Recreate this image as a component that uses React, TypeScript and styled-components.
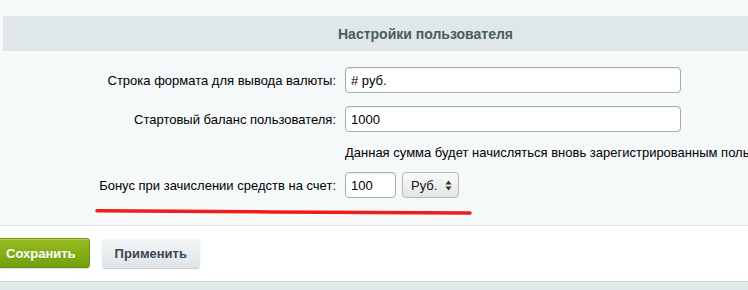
import React from "react";
import styled, { createGlobalStyle } from "styled-components";

const Global = createGlobalStyle`
  html, body { margin: 0; padding: 0; }
  body {
    background: #f5f9f9;
    font-family: "Liberation Sans", Arial, sans-serif;
    font-size: 13px;
    color: #000;
    overflow: hidden;
    width: 748px;
    height: 290px;
  }
`;

const Page = styled.div`
  width: 748px;
  height: 290px;
  overflow: hidden;
  display: flex;
  flex-direction: column;
`;

const HeaderBar = styled.div`
  margin: 16px 0 0 3px;
  height: 35px;
  flex: none;
  background: #e0e7e8;
  display: flex;
  align-items: center;
  padding-left: 335px;
  font-family: "Liberation Sans", Arial, sans-serif;
  font-weight: bold;
  font-size: 14px;
  color: #4b5a60;
`;

const Form = styled.div`
  display: flex;
  flex-direction: column;
  padding-top: 16px;
  height: 174px;
  flex: none;
  box-sizing: border-box;
  position: relative;
`;

const Row = styled.div<{ $gap: number }>`
  display: flex;
  align-items: center;
  gap: 9px;
  margin-bottom: ${(p) => p.$gap}px;
  white-space: nowrap;
`;

const Label = styled.label`
  width: 336px;
  text-align: right;
  flex: none;
`;

const TextInput = styled.input<{ $w: number }>`
  box-sizing: border-box;
  width: ${(p) => p.$w}px;
  height: 26px;
  border: 1px solid #a4abb1;
  border-radius: 4px;
  background: #fff;
  box-shadow: inset 0 1px 1px rgba(0, 0, 0, 0.06);
  font-family: "Liberation Sans", Arial, sans-serif;
  font-size: 13px;
  color: #000;
  padding: 0 5px;
  margin: 0;
  outline: none;
`;

const Hint = styled.div`
  padding-left: 345px;
  white-space: nowrap;
  line-height: 16px;
  margin-bottom: 11px;
`;

const SelectBox = styled.div`
  box-sizing: border-box;
  width: 57px;
  height: 26px;
  margin-left: -3px;
  border: 1px solid #b3b8bb;
  border-radius: 4px;
  background: linear-gradient(#fbfbfb, #e3e4e5);
  display: flex;
  align-items: center;
  justify-content: space-between;
  padding: 0 6px 0 8px;
  color: #111;
`;

const Arrows = styled.svg`
  width: 7px;
  height: 11px;
`;

const Underline = styled.svg`
  position: absolute;
  left: 95px;
  top: 157px;
  width: 378px;
  height: 8px;
`;

const Footer = styled.div`
  background: #fff;
  border-top: 1px solid #dbe3e6;
  height: 56px;
  flex: none;
  display: flex;
  align-items: flex-start;
  gap: 12px;
  padding-top: 12px;
  box-sizing: border-box;
`;

const Button = styled.button<{ $primary?: boolean }>`
  height: 30px;
  border-radius: 3px;
  font-family: "Liberation Sans", Arial, sans-serif;
  font-weight: bold;
  font-size: 13px;
  cursor: pointer;
  padding: 0 13px;
  margin: 0;
  ${(p) =>
    p.$primary
      ? `
    margin-left: -8px;
    border: 1px solid #6c9412;
    background: linear-gradient(#97bd1e, #71a00c);
    color: #fff;
    box-shadow: inset 0 1px 0 rgba(255,255,255,0.25), 0 1px 1px rgba(0,0,0,0.15);
    text-shadow: 0 1px 0 rgba(0,0,0,0.1);
  `
      : `
    width: 98px;
    border: none;
    background: linear-gradient(#f4f7f8, #dde5e8);
    color: #3d474d;
    box-shadow: 0 1px 1px rgba(0,0,0,0.22), inset 0 1px 0 #fff;
  `}
`;

const BottomBar = styled.div`
  flex: 1;
  background: #e2e9ea;
  border-top: 1px solid #cdd6d7;
`;

export default function App() {
  return (
    <Page>
      <Global />
      <HeaderBar>Настройки пользователя</HeaderBar>
      <Form>
        <Row $gap={13}>
          <Label>Строка формата для вывода валюты:</Label>
          <TextInput $w={336} defaultValue="# руб." />
        </Row>
        <Row $gap={13}>
          <Label>Стартовый баланс пользователя:</Label>
          <TextInput $w={336} defaultValue="1000" />
        </Row>
        <Hint>Данная сумма будет начисляться вновь зарегистрированным пользователям</Hint>
        <Row $gap={0}>
          <Label>Бонус при зачислении средств на счет:</Label>
          <TextInput $w={51} defaultValue="100" />
          <SelectBox>
            <span>Руб.</span>
            <Arrows viewBox="0 0 7 11">
              <path d="M3.5 0.5 L6.5 4.5 L0.5 4.5 Z" fill="#333" />
              <path d="M3.5 10.5 L6.5 6.5 L0.5 6.5 Z" fill="#333" />
            </Arrows>
          </SelectBox>
        </Row>
        <Underline viewBox="0 0 378 8">
          <path d="M2 2.8 C 120 3.6, 260 4.4, 375 4.9" stroke="#ee1c1c" strokeWidth="3.5" strokeLinecap="round" fill="none" />
        </Underline>
      </Form>
      <Footer>
        <Button $primary>Сохранить</Button>
        <Button>Применить</Button>
      </Footer>
      <BottomBar />
    </Page>
  );
}
